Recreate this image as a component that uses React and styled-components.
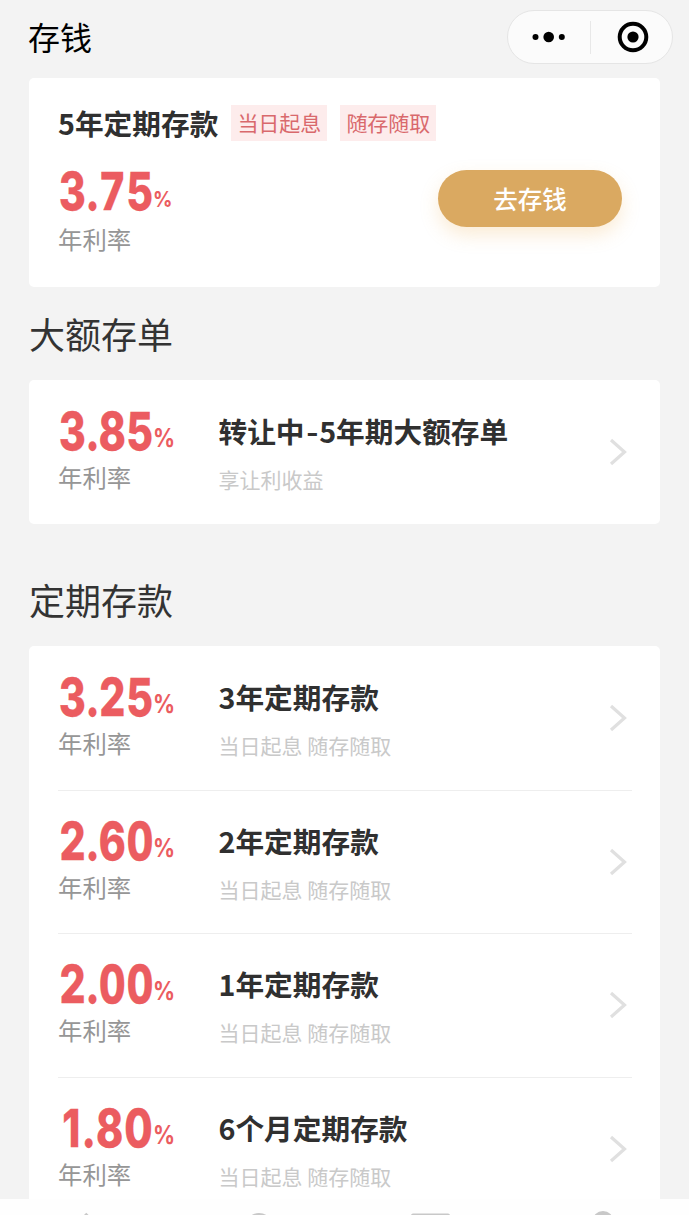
import React from "react";
import styled, { createGlobalStyle } from "styled-components";

const deposits = [
    { rate: "3.25", name: "3年定期存款", note: "当日起息 随存随取" },
    { rate: "2.60", name: "2年定期存款", note: "当日起息 随存随取" },
    { rate: "2.00", name: "1年定期存款", note: "当日起息 随存随取" },
    { rate: "1.80", name: "6个月定期存款", note: "当日起息 随存随取" },
];

const Rate = ({ value, featured }) => (
    <RateBlock>
        <RateLine $featured={featured}>
            <Digits $proportional={value.startsWith("1")}><span>{value}</span></Digits>
            <Percent $featured={featured}>%</Percent>
        </RateLine>
        <RateLabel>年利率</RateLabel>
    </RateBlock>
);

const Product = ({ rate, name, note }) => (
    <Row>
        <Rate value={rate} />
        <Info>
            <Name>{name}</Name>
            <Note>{note}</Note>
        </Info>
        <Chevron viewBox="0 0 18 28">
            <path d="M2 2 L15.5 14 L2 26" />
        </Chevron>
    </Row>
);

const App = () => {
    return (
        <React.Fragment>
            <GlobalStyle />
            <Page>
                <Header>
                    <PageTitle>存钱</PageTitle>
                    <Capsule>
                        <svg width="34" height="12" viewBox="0 0 34 12">
                            <circle cx="3.5" cy="6" r="3" />
                            <circle cx="16.7" cy="6" r="5.3" />
                            <circle cx="29.8" cy="6" r="3" />
                        </svg>
                        <CapsuleLine />
                        <svg width="32" height="32" viewBox="0 0 32 32">
                            <circle cx="16" cy="16" r="13.3" fill="none" stroke="#000" strokeWidth="4" />
                            <circle cx="16" cy="16" r="5.6" />
                        </svg>
                    </Capsule>
                </Header>
                <Content>
                    <Featured>
                        <TitleLine>
                            <Name>5年定期存款</Name>
                            <Tag>当日起息</Tag>
                            <Tag>随存随取</Tag>
                        </TitleLine>
                        <FeaturedBody>
                            <Rate value="3.75" featured />
                            <SaveButton>去存钱</SaveButton>
                        </FeaturedBody>
                    </Featured>
                    <SectionTitle>大额存单</SectionTitle>
                    <Card>
                        <Product
                            rate="3.85"
                            name={<>转让中<Dash>-</Dash>5年期大额存单</>}
                            note="享让利收益"
                        />
                    </Card>
                    <SectionTitle $far>定期存款</SectionTitle>
                    <Card>
                        {deposits.map((item) => <Product key={item.name} {...item} />)}
                    </Card>
                </Content>
                <TabBar>
                    <svg width="689" height="16" viewBox="0 0 689 16" fill="#c8c8c8">
                        <path d="M84 16 L86.3 13.8 L88.6 16 Z" />
                        <circle cx="259" cy="28" r="14" />
                        <rect x="411" y="14.5" width="39" height="4" rx="2" />
                        <circle cx="603" cy="22.5" r="10.5" />
                    </svg>
                </TabBar>
            </Page>
        </React.Fragment>
    );
}

const GlobalStyle = createGlobalStyle`
    * {
        box-sizing: border-box;
    }
    body {
        margin: 0;
        background: #f3f3f3;
        font-family: "Noto Sans CJK SC", sans-serif;
    }
`;

const Page = styled.div`
    display: flex;
    flex-direction: column;
    width: 689px;
    height: 1215px;
    overflow: hidden;
    background: #f3f3f3;
`;

const Header = styled.header`
    display: flex;
    flex: none;
    justify-content: space-between;
    height: 78px;
    padding: 10px 16px 0 28px;
`;

const PageTitle = styled.h1`
    margin: 2px 0 0;
    font-size: 32px;
    font-weight: 400;
    line-height: 48px;
    color: #000;
`;

const Capsule = styled.div`
    display: flex;
    align-items: center;
    width: 166px;
    height: 54px;
    padding-left: 24px;
    border: 1px solid #e5e5e5;
    border-radius: 27px;
    background: #fbfbfb;
`;

const CapsuleLine = styled.div`
    width: 1px;
    height: 33px;
    margin: 0 26px 0 24px;
    background: #e8e8e8;
`;

const Content = styled.main`
    flex: none;
    height: 1121px;
    padding: 0 29px;
    overflow: hidden;
`;

const Card = styled.section`
    border-radius: 5px;
    background: #fff;
`;

const Featured = styled(Card)`
    height: 209px;
    padding: 27px 38px 0 29px;
`;

const TitleLine = styled.div`
    display: flex;
    align-items: center;
    height: 36px;
`;

const Name = styled.div`
    font-size: 28.7px;
    font-weight: 700;
    line-height: 38px;
    color: #303030;
    white-space: nowrap;
`;

const Dash = styled.span`
    display: inline-block;
    margin: 0 2px;
    transform: scaleX(1.15);
`;

const Tag = styled.span`
    width: 96px;
    height: 36px;
    margin-left: 13px;
    font-size: 21px;
    line-height: 35px;
    text-align: center;
    color: #d9696c;
    background: #fdecec;
`;

const FeaturedBody = styled.div`
    display: flex;
    justify-content: space-between;
    padding-top: 25px;
`;

const RateBlock = styled.div`
    flex: none;
    width: 160.5px;
`;

const RateLine = styled.div`
    display: flex;
    align-items: baseline;
    height: ${(props) => (props.$featured ? "55px" : "53px")};
    padding-left: 1px;
    line-height: 52px;
    font-family: Inter, sans-serif;
    color: #eb5c60;
`;

const Digits = styled.div`
    display: flex;
    justify-content: flex-end;
    width: 95px;
    font-size: 52px;
    font-weight: 800;
    font-variant-numeric: ${(props) => (props.$proportional ? "normal" : "tabular-nums")};
    letter-spacing: 1.4px;
    -webkit-text-stroke: 0.3px #eb5c60;

    span {
        flex: none;
        transform: scaleX(0.79);
        transform-origin: 100% 50%;
    }
`;

const Percent = styled.span`
    margin-left: -1px;
    font-size: ${(props) => (props.$featured ? "22px" : "25px")};
    font-weight: 700;
    line-height: 44px;
    transform: translateY(-3px) scaleX(0.87);
    transform-origin: 0 50%;
`;

const RateLabel = styled.div`
    font-size: 24.4px;
    line-height: 36px;
    color: #969696;
`;

const SaveButton = styled.button`
    width: 184px;
    height: 57px;
    margin-top: 4px;
    padding: 0;
    border: 0;
    border-radius: 29px;
    font-family: inherit;
    font-size: 24.5px;
    font-weight: 500;
    color: #fff;
    background: #daa961;
    box-shadow: 0 8px 18px rgba(240, 180, 90, 0.25);
`;

const SectionTitle = styled.h2`
    display: flex;
    align-items: flex-end;
    height: ${(props) => (props.$far ? "122px" : "93px")};
    margin: 0;
    padding-bottom: 20px;
    font-size: 36px;
    font-weight: 400;
    line-height: 54px;
    color: #333;
`;

const Row = styled.div`
    display: flex;
    height: 143.6px;
    margin: 0 28px 0 29px;
    padding-top: 25px;
    border-bottom: 1px solid #eee;

    &:first-child {
        height: 144.6px;
        padding-top: 26px;
    }

    &:only-child {
        height: 144px;
        border-bottom: 0;
    }
`;

const Info = styled.div`
    flex: 1;
    padding-top: 6px;
`;

const Note = styled.div`
    margin-top: 14px;
    font-size: 21px;
    line-height: 30px;
    color: #c9c9c9;
`;

const Chevron = styled.svg`
    width: 18px;
    height: 28px;
    margin: 32px 5px 0 0;
    fill: none;
    stroke: #e0e0e0;
    stroke-width: 3.2;
`;

const TabBar = styled.footer`
    flex: none;
    height: 16px;
    background: #fefefe;

    svg {
        display: block;
    }
`;

export default App;
